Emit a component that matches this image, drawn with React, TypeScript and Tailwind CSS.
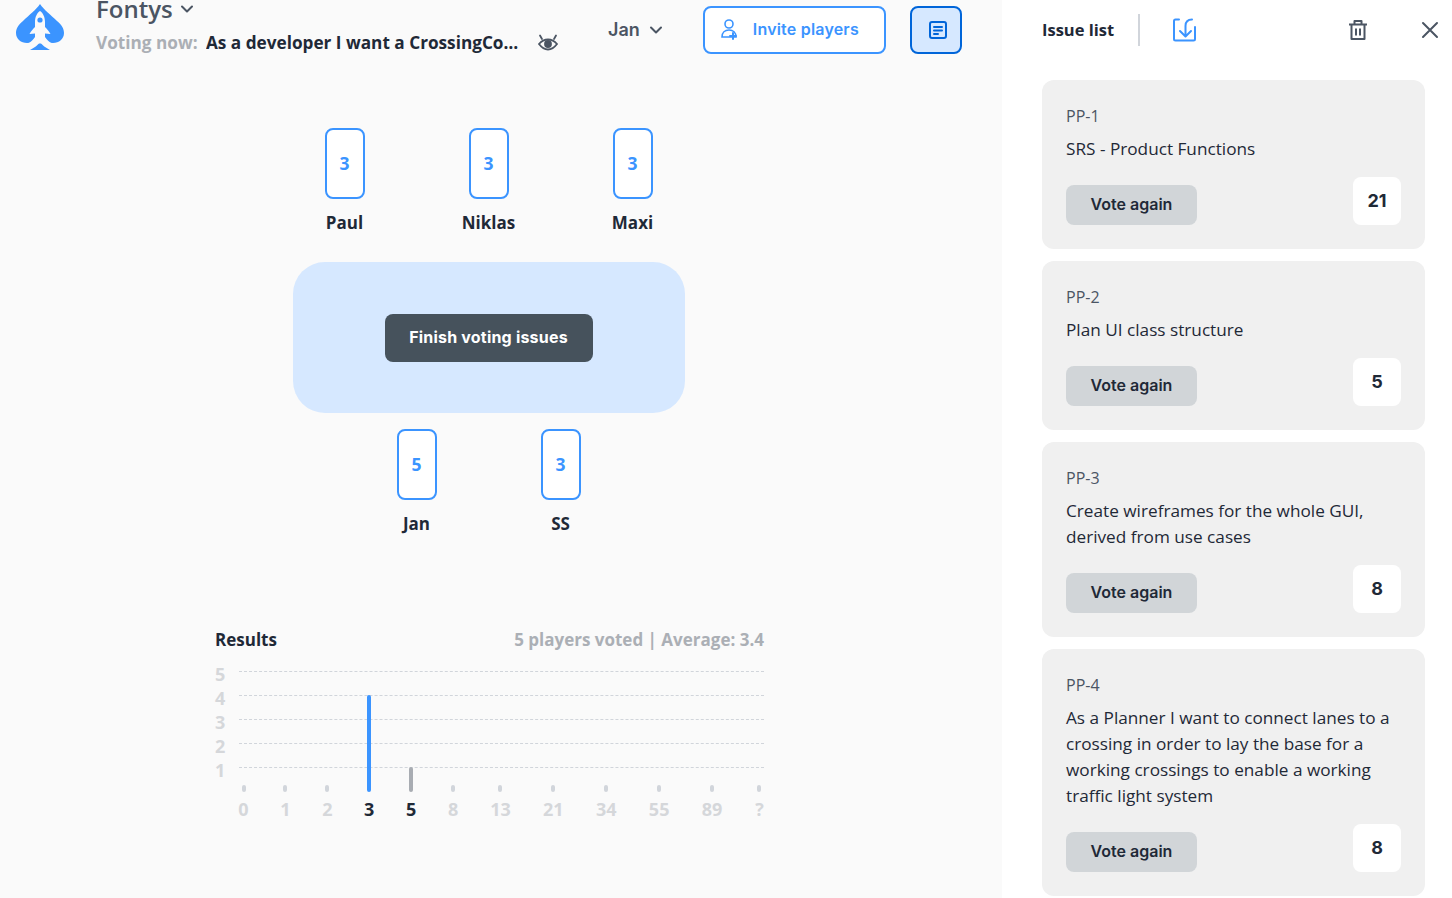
const sans = "font-['Open_Sans','Noto_Sans',sans-serif]";

function Logo() {
  return (
    <svg width="50" height="48" viewBox="0 0 50 48" className="shrink-0">
      <path fill="#3b94ff" d="M25 0 C29 6 36 11 42 17 C47 21 49 25 49 29 C49 35 44 39 38 39 C34 39 31 37 29 35 L21 35 C19 37 16 39 12 39 C6 39 1 35 1 29 C1 25 3 21 8 17 C14 11 21 6 25 0 Z" />
      <path fill="#3b94ff" d="M25 38 C27 41 31 44 35 46 L15 46 C19 44 23 41 25 38 Z" />
      <path fill="#fafafa" d="M25 7 C28 9 30 13 30 18 L30 23 C32 25 34 27 35.5 30 L30 29.5 L30 33 C32 36 34 38 37 39.5 L13 39.5 C16 38 18 36 20 33 L20 29.5 L14.5 30 C16 27 18 25 20 23 L20 18 C20 13 22 9 25 7 Z" />
      <circle cx="25" cy="16" r="2.6" fill="#3b94ff" />
    </svg>
  );
}

function Chevron({ size = 16 }: { size?: number }) {
  return (
    <svg width={size} height={size} viewBox="0 0 16 16" fill="none" stroke="#4b5563" strokeWidth="2" strokeLinecap="round" strokeLinejoin="round">
      <path d="M3 5.5 L8 10.5 L13 5.5" />
    </svg>
  );
}

function Eye() {
  return (
    <svg width="20" height="20" viewBox="0 0 20 20" fill="none" stroke="#4b5563" strokeWidth="1.8" strokeLinecap="round">
      <path d="M1 11 C4 7.5 7 6.5 10 6.5 C13 6.5 16 7.5 19 11 C16 15 13 16.5 10 16.5 C7 16.5 4 15 1 11 Z" />
      <circle cx="10" cy="11" r="3" fill="#4b5563" />
      <path d="M2 2.5 L4 6 M18 2.5 L16 6" />
    </svg>
  );
}

function Card({ value, name }: { value: string; name: string }) {
  return (
    <div className="flex w-[144px] flex-col items-center">
      <div className={`flex h-[71px] w-10 items-center justify-center rounded-lg border-2 border-[#3b94ff] bg-white text-[17.5px] font-bold text-[#3b94ff] ${sans}`}>
        {value}
      </div>
      <div className={`mt-[12px] text-[17px] leading-6 font-bold text-[#1f2937] ${sans}`}>{name}</div>
    </div>
  );
}

const axis = [
  { l: "0", h: 7 },
  { l: "1", h: 7 },
  { l: "2", h: 7 },
  { l: "3", h: 97, c: "bg-[#3b94ff]", t: "text-[#1f2937]" },
  { l: "5", h: 25, c: "bg-[#a8acb2]", t: "text-[#1f2937]" },
  { l: "8", h: 7 },
  { l: "13", h: 7 },
  { l: "21", h: 7 },
  { l: "34", h: 7 },
  { l: "55", h: 7 },
  { l: "89", h: 7 },
  { l: "?", h: 7 },
];

function Results() {
  return (
    <div className={`mt-[92px] ml-[2px] w-[549px] ${sans}`}>
      <div className="flex h-6 items-center justify-between text-[17px] font-bold">
        <span className="text-[#1f2937]">Results</span>
        <span className="text-[#abafb5]">5 players voted | Average: 3.4</span>
      </div>
      <div className="relative mt-[19px] h-[121px]">
        <div className="flex flex-col">
          {["5", "4", "3", "2", "1"].map((n) => (
            <div key={n} className="flex h-6 items-start">
              <span className="-mt-[7px] w-6 text-lg leading-[20px] font-bold text-[#d5d7da]">{n}</span>
              <div className="flex-1 border-t border-dashed border-[#d1d5db]" />
            </div>
          ))}
        </div>
        <div className="absolute right-0 bottom-0 left-6 flex items-end justify-between">
          {axis.map((a) => (
            <div key={a.l} className={`flex items-end justify-center ${a.l.length > 1 ? "w-[20px]" : "w-[9px]"}`}>
              <div style={{ height: a.h }} className={`w-1 rounded-full ${a.c ?? "bg-[#d1d5db]"}`} />
            </div>
          ))}
        </div>
      </div>
      <div className="mt-[5px] ml-6 flex justify-between text-lg leading-6 font-bold">
        {axis.map((a) => (
          <span key={a.l} className={`${a.l.length > 1 ? "w-[20px]" : "w-[9px]"} flex justify-center ${a.t ?? "text-[#d5d7da]"}`}>
            {a.l}
          </span>
        ))}
      </div>
    </div>
  );
}

function Issue({ id, title, score }: { id: string; title: string; score: string }) {
  return (
    <div className={`flex flex-col rounded-xl bg-[#f0f0f0] p-6 ${sans}`}>
      <div className="text-base leading-6 text-[#4b5563]">{id}</div>
      <div className="mt-2 text-[17.2px] leading-[26px] text-[#1f2937]">{title}</div>
      <div className="mt-[15px] flex items-end justify-between">
        <button className="h-10 w-[131px] rounded-lg bg-[#d1d5d8] pb-[2px] font-['Inter',sans-serif] text-base font-semibold text-[#1f2937]">
          Vote again
        </button>
        <div className="flex h-12 w-12 items-center justify-center rounded-lg bg-white font-['Inter',sans-serif] text-lg font-bold text-[#1f2937]">
          {score}
        </div>
      </div>
    </div>
  );
}

export default function App() {
  return (
    <div className="flex h-[898px] w-[1452px] overflow-hidden bg-white">
      <main className="flex w-[1002px] shrink-0 flex-col bg-[#fafafa]">
        <header className="flex h-[64px] items-start">
          <div className="mt-[4px] ml-[15px]">
            <Logo />
          </div>
          <div className="-mt-[5px] ml-[31px] w-[462px]">
            <div className={`flex h-[28px] items-center gap-1.5 text-2xl leading-[28px] font-semibold text-[#4b5563] ${sans}`}>
              Fontys <Chevron />
            </div>
            <div className={`mt-[4px] flex h-8 items-center ${sans}`}>
              <span className="w-[102px] shrink-0 text-[17.2px] whitespace-nowrap font-bold text-[#abafb5]">Voting now:</span>
              <span className="ml-2 w-[313px] shrink-0 truncate text-[17.2px] font-bold text-[#1f2937]">
                As a developer I want a CrossingController class
              </span>
              <span className="ml-[19px] shrink-0">
                <Eye />
              </span>
            </div>
          </div>
          <div className="mt-[18px] ml-[50px] flex h-6 items-center gap-2 font-['Inter',sans-serif] text-lg font-semibold text-[#4b5563]">
            Jan <Chevron />
          </div>
          <button className="mt-[6px] ml-[39px] flex h-12 w-[183px] items-center rounded-lg border-2 border-[#3b94ff] bg-white pb-[2px] pl-[15px] font-['Inter',sans-serif] text-base font-semibold tracking-[0.2px] text-[#3b94ff]">
            <svg width="20" height="22" viewBox="0 0 20 22" fill="none" stroke="#3b94ff" strokeWidth="1.6" strokeLinecap="round">
              <circle cx="9" cy="6" r="4" />
              <path d="M2 19 C2 14.5 5 12 9 12 C13 12 16 14.5 16 19 L2 19 Z" fill="white" />
              <path d="M10 18 H16 M13 15 V21" strokeWidth="2" />
            </svg>
            <span className="ml-[13px]">Invite players</span>
          </button>
          <button className="mt-[6px] ml-[24px] flex h-12 w-[52px] items-center justify-center rounded-lg border-2 border-[#0065d9] bg-[#d6e8ff] pl-1">
            <svg width="20" height="20" viewBox="0 0 20 20" fill="none" stroke="#0065d9" strokeWidth="2" strokeLinecap="round">
              <rect x="2" y="2" width="16" height="16" rx="2" />
              <path d="M6 7 H14 M6 10.5 H14 M6 14 H10" />
            </svg>
          </button>
        </header>
        <section className="flex flex-col items-center pr-[25px] pt-[64px]">
          <div className="flex">
            <Card value="3" name="Paul" />
            <Card value="3" name="Niklas" />
            <Card value="3" name="Maxi" />
          </div>
          <div className="mt-[27px] flex h-[151px] w-[392px] items-center justify-center rounded-[32px] bg-[#d6e8ff]">
            <button className="h-12 w-[208px] rounded-lg bg-[#46525c] pb-[2px] font-['Inter',sans-serif] text-base font-bold tracking-[0.2px] text-white">
              Finish voting issues
            </button>
          </div>
          <div className="mt-[16px] flex">
            <Card value="5" name="Jan" />
            <Card value="3" name="SS" />
          </div>
          <Results />
        </section>
      </main>
      <aside className="flex flex-1 flex-col">
        <div className="flex h-[80px] items-start pl-10">
          <span className={`mt-[18px] text-[16.5px] leading-6 font-bold text-[#1f2937] ${sans}`}>Issue list</span>
          <div className="mt-[14px] ml-[24px] h-8 w-0.5 bg-[#d1d5db]" />
          <svg className="mt-[18px] ml-[33px]" width="24" height="24" viewBox="0 0 24 24" fill="none" stroke="#3b94ff" strokeWidth="2" strokeLinecap="round" strokeLinejoin="round">
            <path d="M6 1.5 H2.5 Q1 1.5 1 3 V21 Q1 22.5 2.5 22.5 H20.5 Q22 22.5 22 21 V9" />
            <path d="M19 1.5 C15 1.5 12.5 4 12.5 8 V18 M7 13 L12.5 18.5 L18 13" />
          </svg>
          <svg className="mt-[19px] ml-[150px]" width="22" height="22" viewBox="0 0 22 22" fill="none" stroke="#4b5563" strokeWidth="2" strokeLinejoin="round">
            <path d="M2 5.5 H20 M7.5 5 V2 H14.5 V5 M4.5 6 V20 H17.5 V6 M9 9.5 V16.5 M13 9.5 V16.5" />
          </svg>
          <svg className="mt-[20px] ml-[51px]" width="20" height="20" viewBox="0 0 20 20" fill="none" stroke="#4b5563" strokeWidth="2" strokeLinecap="round">
            <path d="M3 3 L17 17 M17 3 L3 17" />
          </svg>
        </div>
        <div className="ml-10 flex w-[383px] flex-col gap-3">
          <Issue id="PP-1" title="SRS - Product Functions" score="21" />
          <Issue id="PP-2" title="Plan UI class structure" score="5" />
          <Issue id="PP-3" title="Create wireframes for the whole GUI, derived from use cases" score="8" />
          <Issue id="PP-4" title="As a Planner I want to connect lanes to a crossing in order to lay the base for a working crossings to enable a working traffic light system" score="8" />
        </div>
      </aside>
    </div>
  );
}
